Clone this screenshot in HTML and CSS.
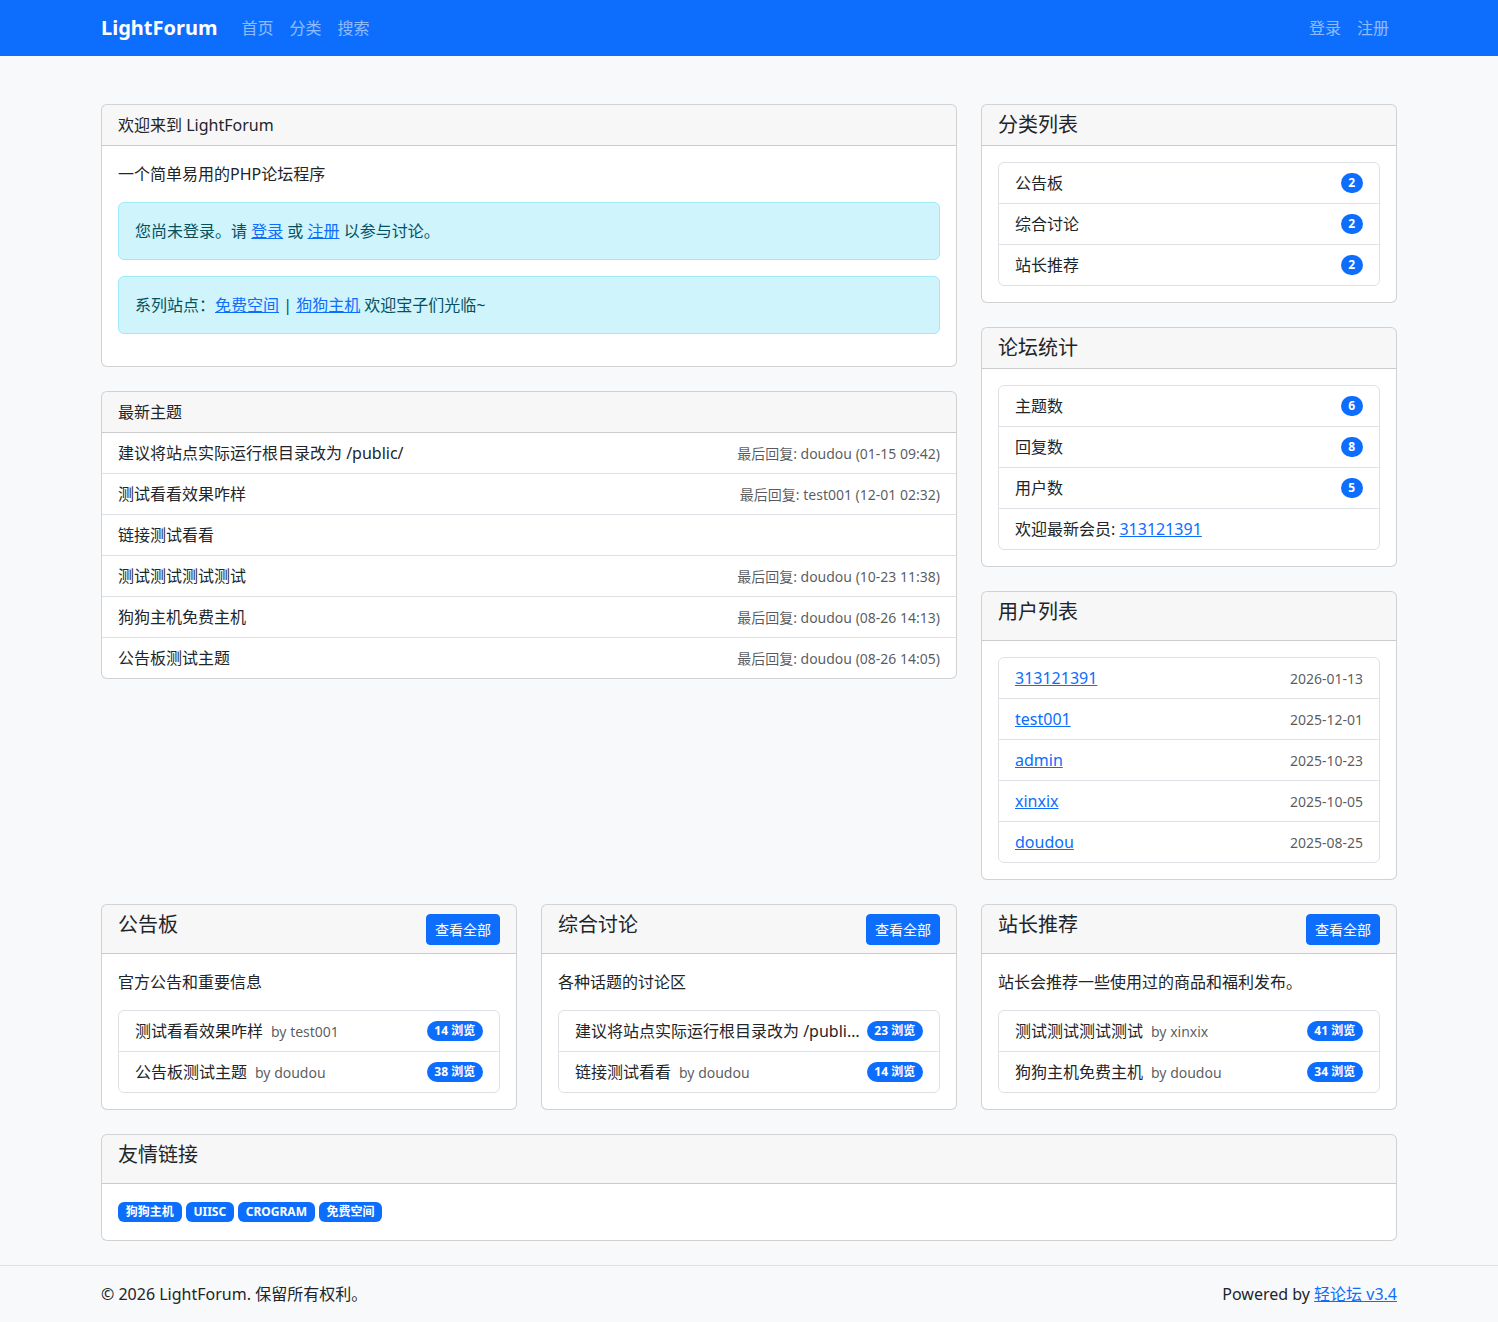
FILE: index.html
```html
<!doctype html>
<html lang="zh-CN">
    <head>
        <meta charset="UTF-8" />
        <meta name="viewport" content="width=device-width, initial-scale=1.0" />
        <title>LightForum</title>
        <link rel="stylesheet" href="styles.css">
    </head>
    <body>
        <nav class="topbar">
            <div class="container topbar-inner">
                <a class="brand" href="#">LightForum</a>
                <ul class="nav-links">
                    <li><a href="#">首页</a></li>
                    <li><a href="#">分类</a></li>
                    <li><a href="#">搜索</a></li>
                </ul>
                <ul class="nav-links nav-right">
                    <li><a href="#">登录</a></li>
                    <li><a href="#">注册</a></li>
                </ul>
            </div>
        </nav>

        <main class="container page">
            <div class="main-row">
                <!-- left column -->
                <div class="col">
                    <div class="card">
                        <div class="card-header">欢迎来到 LightForum</div>
                        <div class="card-body">
                            <p class="intro">一个简单易用的PHP论坛程序</p>
                            <div class="alert">您尚未登录。请 <a href="#">登录</a> 或 <a href="#">注册</a> 以参与讨论。</div>
                            <div class="alert">系列站点：<a href="#">免费空间</a> | <a href="#">狗狗主机</a> 欢迎宝子们光临~</div>
                        </div>
                    </div>

                    <div class="card">
                        <div class="card-header">最新主题</div>
                        <ul class="list-flush">
                            <li class="row-item">
                                <a class="topic" href="#">建议将站点实际运行根目录改为 /public/</a>
                                <small class="muted">最后回复: doudou (01-15 09:42)</small>
                            </li>
                            <li class="row-item">
                                <a class="topic" href="#">测试看看效果咋样</a>
                                <small class="muted">最后回复: test001 (12-01 02:32)</small>
                            </li>
                            <li class="row-item">
                                <a class="topic" href="#">链接测试看看</a>
                            </li>
                            <li class="row-item">
                                <a class="topic" href="#">测试测试测试测试</a>
                                <small class="muted">最后回复: doudou (10-23 11:38)</small>
                            </li>
                            <li class="row-item">
                                <a class="topic" href="#">狗狗主机免费主机</a>
                                <small class="muted">最后回复: doudou (08-26 14:13)</small>
                            </li>
                            <li class="row-item">
                                <a class="topic" href="#">公告板测试主题</a>
                                <small class="muted">最后回复: doudou (08-26 14:05)</small>
                            </li>
                        </ul>
                    </div>
                </div>

                <!-- sidebar -->
                <div class="col">
                    <div class="card">
                        <div class="card-header"><h5 class="title flat">分类列表</h5></div>
                        <div class="card-body">
                            <ul class="list-group">
                                <li class="row-item"><a class="topic" href="#">公告板</a><span class="pill">2</span></li>
                                <li class="row-item"><a class="topic" href="#">综合讨论</a><span class="pill">2</span></li>
                                <li class="row-item"><a class="topic" href="#">站长推荐</a><span class="pill">2</span></li>
                            </ul>
                        </div>
                    </div>

                    <div class="card">
                        <div class="card-header"><h5 class="title flat">论坛统计</h5></div>
                        <div class="card-body">
                            <ul class="list-group">
                                <li class="row-item">主题数<span class="pill">6</span></li>
                                <li class="row-item">回复数<span class="pill">8</span></li>
                                <li class="row-item">用户数<span class="pill">5</span></li>
                                <li class="row-item start">欢迎最新会员:&nbsp;<a href="#">313121391</a></li>
                            </ul>
                        </div>
                    </div>

                    <div class="card">
                        <div class="card-header"><h5 class="title">用户列表</h5></div>
                        <div class="card-body">
                            <ul class="list-group">
                                <li class="row-item"><a href="#">313121391</a><small class="muted">2026-01-13</small></li>
                                <li class="row-item"><a href="#">test001</a><small class="muted">2025-12-01</small></li>
                                <li class="row-item"><a href="#">admin</a><small class="muted">2025-10-23</small></li>
                                <li class="row-item"><a href="#">xinxix</a><small class="muted">2025-10-05</small></li>
                                <li class="row-item"><a href="#">doudou</a><small class="muted">2025-08-25</small></li>
                            </ul>
                        </div>
                    </div>
                </div>
            </div>

            <!-- category boxes -->
            <div class="cat-row">
                <div class="card">
                    <div class="card-header split">
                        <h5 class="title">公告板</h5>
                        <a class="btn-sm" href="#">查看全部</a>
                    </div>
                    <div class="card-body">
                        <p class="intro">官方公告和重要信息</p>
                        <ul class="list-group">
                            <li class="row-item">
                                <div class="cut"><a class="topic" href="#">测试看看效果咋样</a><small class="muted by">by test001</small></div>
                                <span class="pill">14 浏览</span>
                            </li>
                            <li class="row-item">
                                <div class="cut"><a class="topic" href="#">公告板测试主题</a><small class="muted by">by doudou</small></div>
                                <span class="pill">38 浏览</span>
                            </li>
                        </ul>
                    </div>
                </div>

                <div class="card">
                    <div class="card-header split">
                        <h5 class="title">综合讨论</h5>
                        <a class="btn-sm" href="#">查看全部</a>
                    </div>
                    <div class="card-body">
                        <p class="intro">各种话题的讨论区</p>
                        <ul class="list-group">
                            <li class="row-item">
                                <div class="cut"><a class="topic" href="#">建议将站点实际运行根目录改为 /public/</a><small class="muted by">by doudou</small></div>
                                <span class="pill">23 浏览</span>
                            </li>
                            <li class="row-item">
                                <div class="cut"><a class="topic" href="#">链接测试看看</a><small class="muted by">by doudou</small></div>
                                <span class="pill">14 浏览</span>
                            </li>
                        </ul>
                    </div>
                </div>

                <div class="card">
                    <div class="card-header split">
                        <h5 class="title">站长推荐</h5>
                        <a class="btn-sm" href="#">查看全部</a>
                    </div>
                    <div class="card-body">
                        <p class="intro">站长会推荐一些使用过的商品和福利发布。</p>
                        <ul class="list-group">
                            <li class="row-item">
                                <div class="cut"><a class="topic" href="#">测试测试测试测试</a><small class="muted by">by xinxix</small></div>
                                <span class="pill">41 浏览</span>
                            </li>
                            <li class="row-item">
                                <div class="cut"><a class="topic" href="#">狗狗主机免费主机</a><small class="muted by">by doudou</small></div>
                                <span class="pill">34 浏览</span>
                            </li>
                        </ul>
                    </div>
                </div>
            </div>

            <div class="card">
                <div class="card-header"><h5 class="title">友情链接</h5></div>
                <div class="card-body">
                    <div class="friend-links">
                        <a class="tag" href="#">狗狗主机</a>
                        <a class="tag" href="#">UIISC</a>
                        <a class="tag" href="#">CROGRAM</a>
                        <a class="tag" href="#">免费空间</a>
                    </div>
                </div>
            </div>
        </main>

        <footer class="site-footer">
            <div class="container footer-inner">
                <span>© 2026 LightForum. 保留所有权利。</span>
                <span>Powered by <a href="#">轻论坛 v3.4</a></span>
            </div>
        </footer>
    </body>
</html>
```

FILE: styles.css
```css
* {
    box-sizing: border-box;
}
body {
    margin: 0;
    font-family: "Noto Sans", "Noto Sans CJK SC", sans-serif;
    font-size: 16px;
    line-height: 1.5;
    color: #212529;
    background-color: #f8f9fa;
}
a {
    color: #0d6efd;
}
ul {
    list-style: none;
    margin: 0;
    padding: 0;
}
.container {
    max-width: 1320px;
    margin: 0 auto;
    padding: 0 12px;
}

/* top navigation */
.topbar {
    background-color: #0d6efd;
    height: 56px;
}
.topbar-inner {
    display: flex;
    align-items: center;
    height: 100%;
}
.brand {
    color: #fff;
    font-size: 20px;
    font-weight: 700;
    text-decoration: none;
    margin-right: 16px;
}
.nav-links {
    display: flex;
}
.nav-links a {
    display: block;
    padding: 8px;
    color: rgba(255, 255, 255, 0.55);
    text-decoration: none;
}
.nav-right {
    margin-left: auto;
}

/* layout */
.page {
    margin-top: 48px;
}
.main-row {
    display: grid;
    grid-template-columns: minmax(0, 856fr) minmax(0, 416fr);
    column-gap: 24px;
    align-items: start;
}
.cat-row {
    display: grid;
    grid-template-columns: repeat(3, minmax(0, 1fr));
    column-gap: 24px;
}

/* cards */
.card {
    background-color: #fff;
    border: 1px solid rgba(0, 0, 0, 0.175);
    border-radius: 6px;
    margin-bottom: 24px;
    overflow: hidden;
}
.card-header {
    padding: 8px 16px;
    background-color: rgba(0, 0, 0, 0.03);
    border-bottom: 1px solid rgba(0, 0, 0, 0.175);
}
.card-header.split {
    display: flex;
    justify-content: space-between;
    align-items: center;
}
.card-body {
    padding: 16px;
}
.title {
    margin: 0 0 8px;
    font-size: 20px;
    font-weight: 400;
    line-height: 1.2;
}
.title.flat {
    margin-bottom: 0;
}
.intro {
    margin: 0 0 16px;
}

.alert {
    padding: 16px;
    margin-bottom: 16px;
    color: #055160;
    background-color: #cff4fc;
    border: 1px solid #9eeaf9;
    border-radius: 6px;
}

/* list rows */
.row-item {
    display: flex;
    justify-content: space-between;
    align-items: center;
    padding: 8px 16px;
}
.row-item.start {
    justify-content: flex-start;
}
.list-flush .row-item {
    border-bottom: 1px solid #dee2e6;
}
.list-flush .row-item:last-child {
    border-bottom: 0;
}
.list-group {
    border: 1px solid #dee2e6;
    border-radius: 6px;
}
.list-group .row-item + .row-item {
    border-top: 1px solid #dee2e6;
}
.topic {
    color: #212529;
    text-decoration: none;
}
.muted {
    font-size: 14px;
    color: rgba(33, 37, 41, 0.75);
}
.by {
    margin-left: 8px;
}
.cut {
    flex: 1;
    min-width: 0;
    overflow: hidden;
    white-space: nowrap;
    text-overflow: ellipsis;
}

.pill {
    flex-shrink: 0;
    display: inline-block;
    padding: 0.35em 0.65em;
    font-size: 12px;
    font-weight: 700;
    line-height: 1;
    color: #fff;
    background-color: #0d6efd;
    border-radius: 50rem;
}
.cut + .pill {
    margin-left: 2px;
}
.btn-sm {
    display: inline-block;
    padding: 4px 8px;
    font-size: 14px;
    line-height: 1.5;
    color: #fff;
    background-color: #0d6efd;
    border: 1px solid #0d6efd;
    border-radius: 4px;
    text-decoration: none;
}

.friend-links {
    display: flex;
    align-items: center;
    gap: 4px;
    height: 24px;
}
.tag {
    padding: 0.35em 0.65em;
    font-size: 12px;
    font-weight: 700;
    line-height: 1;
    color: #fff;
    background-color: #0d6efd;
    border-radius: 6px;
    text-decoration: none;
}

/* footer */
.site-footer {
    background-color: #f8f9fa;
    border-top: 1px solid #dee2e6;
    padding: 16px 0;
}
.footer-inner {
    display: flex;
    justify-content: space-between;
}
```
